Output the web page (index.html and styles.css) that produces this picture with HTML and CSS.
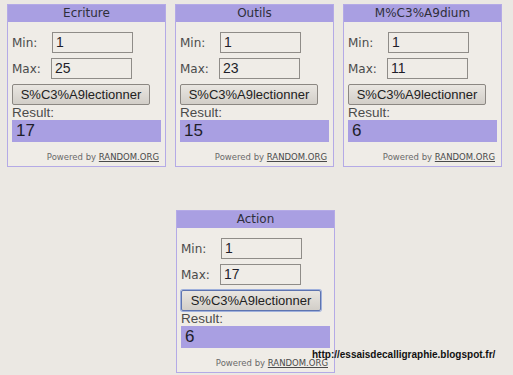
FILE: index.html
```html
<!DOCTYPE html>
<html lang="fr">
<head>
    <meta charset="UTF-8">
    <meta name="viewport" content="width=device-width, initial-scale=1.0">
    <title>Essais de calligraphie - Random</title>
    <link rel="stylesheet" href="styles.css">
</head>
<body>
    <div class="row top">
        <div class="widget">
            <div class="title">Ecriture</div>
            <div class="body">
                <div class="field"><span class="label">Min:</span><span class="input">1</span></div>
                <div class="field"><span class="label">Max:</span><span class="input">25</span></div>
                <button class="pick">S%C3%A9lectionner</button>
                <div class="result-label">Result:</div>
                <div class="result">17</div>
                <div class="powered">Powered by <a href="#">RANDOM.ORG</a></div>
            </div>
        </div>
        <div class="widget">
            <div class="title">Outils</div>
            <div class="body">
                <div class="field"><span class="label">Min:</span><span class="input">1</span></div>
                <div class="field"><span class="label">Max:</span><span class="input">23</span></div>
                <button class="pick">S%C3%A9lectionner</button>
                <div class="result-label">Result:</div>
                <div class="result">15</div>
                <div class="powered">Powered by <a href="#">RANDOM.ORG</a></div>
            </div>
        </div>
        <div class="widget">
            <div class="title">M%C3%A9dium</div>
            <div class="body">
                <div class="field"><span class="label">Min:</span><span class="input">1</span></div>
                <div class="field"><span class="label">Max:</span><span class="input">11</span></div>
                <button class="pick">S%C3%A9lectionner</button>
                <div class="result-label">Result:</div>
                <div class="result">6</div>
                <div class="powered">Powered by <a href="#">RANDOM.ORG</a></div>
            </div>
        </div>
    </div>

    <div class="row bottom">
        <div class="widget">
            <div class="title">Action</div>
            <div class="body">
                <div class="field"><span class="label">Min:</span><span class="input">1</span></div>
                <div class="field"><span class="label">Max:</span><span class="input">17</span></div>
                <button class="pick focused">S%C3%A9lectionner</button>
                <div class="result-label">Result:</div>
                <div class="result">6</div>
                <div class="powered">Powered by <a href="#">RANDOM.ORG</a></div>
            </div>
        </div>
    </div>

    <!-- blog watermark -->
    <div class="watermark">http://essaisdecalligraphie.blogspot.fr/</div>
</body>
</html>
```

FILE: styles.css
```css
body {
    margin: 0;
    padding: 0;
    background-color: #ebe8e3;
    color: #333;
    font-family: "DejaVu Sans", Verdana, sans-serif;
    position: relative;
    height: 375px;
    overflow: hidden;
}
.row {
    display: flex;
    gap: 9px;
}
.row.top {
    padding: 4px 0 0 7px;
}
.row.bottom {
    padding: 43px 0 0 176px;
}
.widget {
    width: 157px;
    height: 161px;
    border: 1px solid #b4aae6;
    background-color: #efece7;
}
.title {
    height: 17px;
    line-height: 17px;
    text-align: center;
    font-size: 12px;
    color: #2f2f3a;
    background-color: #a99fe2;
}
.body {
    padding: 10px 4px 0 4px;
}
.field {
    display: flex;
    align-items: center;
    height: 21px;
    margin-bottom: 5px;
}
.label {
    width: 40px;
    font-size: 12px;
    color: #4b4b4b;
}
.input {
    box-sizing: border-box;
    width: 81px;
    height: 21px;
    line-height: 19px;
    padding-left: 3px;
    border: 1px solid #8f8c88;
    background-color: #efece7;
    font-family: "Liberation Sans", Arial, sans-serif;
    font-size: 14px;
    color: #1e1e2a;
}
.field:nth-child(2) .input {
    margin-left: -1px;
}
.pick {
    display: block;
    box-sizing: border-box;
    width: 138px;
    height: 21px;
    margin: 0;
    padding: 0;
    border: 1px solid #8b8782;
    border-radius: 2px;
    background: linear-gradient(#e9e6e1, #d2cec8);
    font-family: "Liberation Sans", Arial, sans-serif;
    font-size: 13px;
    color: #222;
}
.pick.focused {
    width: 140px;
    border: 1px solid #5e74b0;
    box-shadow: 0 0 0 1px #9fb0dc;
}
.result-label {
    height: 15px;
    line-height: 15px;
    font-family: "Liberation Sans", Arial, sans-serif;
    font-size: 13.5px;
    color: #4b4b4b;
}
.result {
    width: 145px;
    height: 22px;
    line-height: 22px;
    padding-left: 4px;
    background-color: #a99fe2;
    font-family: "Liberation Sans", Arial, sans-serif;
    font-size: 17px;
    color: #1e1e2a;
}
.powered {
    margin-top: 9px;
    padding-right: 2px;
    text-align: right;
    font-size: 8.5px;
    line-height: 12px;
    color: #6a6a6a;
}
.powered a {
    color: #4a4a4a;
    text-decoration: underline;
}
.watermark {
    position: absolute;
    left: 312px;
    top: 349px;
    font-family: "Liberation Sans", Arial, sans-serif;
    font-weight: bold;
    font-size: 10px;
    color: #111;
}
```
